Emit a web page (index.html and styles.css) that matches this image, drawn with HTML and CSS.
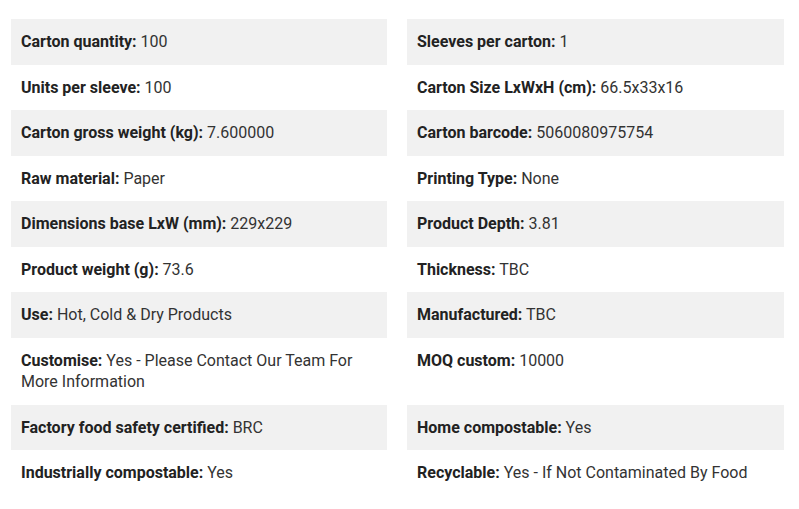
FILE: index.html
```html
<!DOCTYPE html>
<html lang="en">
<head>
<meta charset="utf-8">
<title>Product specifications</title>
<link rel="stylesheet" href="styles.css">
</head>
<body>
<div class="specs">
  <div class="cell shade"><strong>Carton quantity:</strong> 100</div>
  <div class="cell shade"><strong>Sleeves per carton:</strong> 1</div>
  <div class="cell"><strong>Units per sleeve:</strong> 100</div>
  <div class="cell"><strong>Carton Size LxWxH (cm):</strong> 66.5x33x16</div>
  <div class="cell shade"><strong>Carton gross weight (kg):</strong> 7.600000</div>
  <div class="cell shade"><strong>Carton barcode:</strong> 5060080975754</div>
  <div class="cell"><strong>Raw material:</strong> Paper</div>
  <div class="cell"><strong>Printing Type:</strong> None</div>
  <div class="cell shade"><strong>Dimensions base LxW (mm):</strong> 229x229</div>
  <div class="cell shade"><strong>Product Depth:</strong> 3.81</div>
  <div class="cell"><strong>Product weight (g):</strong> 73.6</div>
  <div class="cell"><strong>Thickness:</strong> TBC</div>
  <div class="cell shade"><strong>Use:</strong> Hot, Cold &amp; Dry Products</div>
  <div class="cell shade"><strong>Manufactured:</strong> TBC</div>
  <div class="cell"><strong>Customise:</strong> Yes - Please Contact Our Team For More Information</div>
  <div class="cell"><strong>MOQ custom:</strong> 10000</div>
  <div class="cell shade"><strong>Factory food safety certified:</strong> BRC</div>
  <div class="cell shade"><strong>Home compostable:</strong> Yes</div>
  <div class="cell"><strong>Industrially compostable:</strong> Yes</div>
  <div class="cell"><strong>Recyclable:</strong> Yes - If Not Contaminated By Food</div>
</div>
</body>
</html>
```
FILE: styles.css
```css
html, body {
  margin: 0;
  background: #ffffff;
}
body {
  padding: 19px 15px 0 11px;
  font-family: Roboto, "Liberation Sans", sans-serif;
  font-size: 16px;
  line-height: 21.5px;
  color: #333333;
}
.specs {
  display: grid;
  grid-template-columns: 376px 377px;
  column-gap: 20px;
}
.cell {
  padding: 12px 10px;
}
.cell strong {
  font-weight: 700;
  color: #222222;
}
.shade {
  background: #f1f1f1;
}
```
